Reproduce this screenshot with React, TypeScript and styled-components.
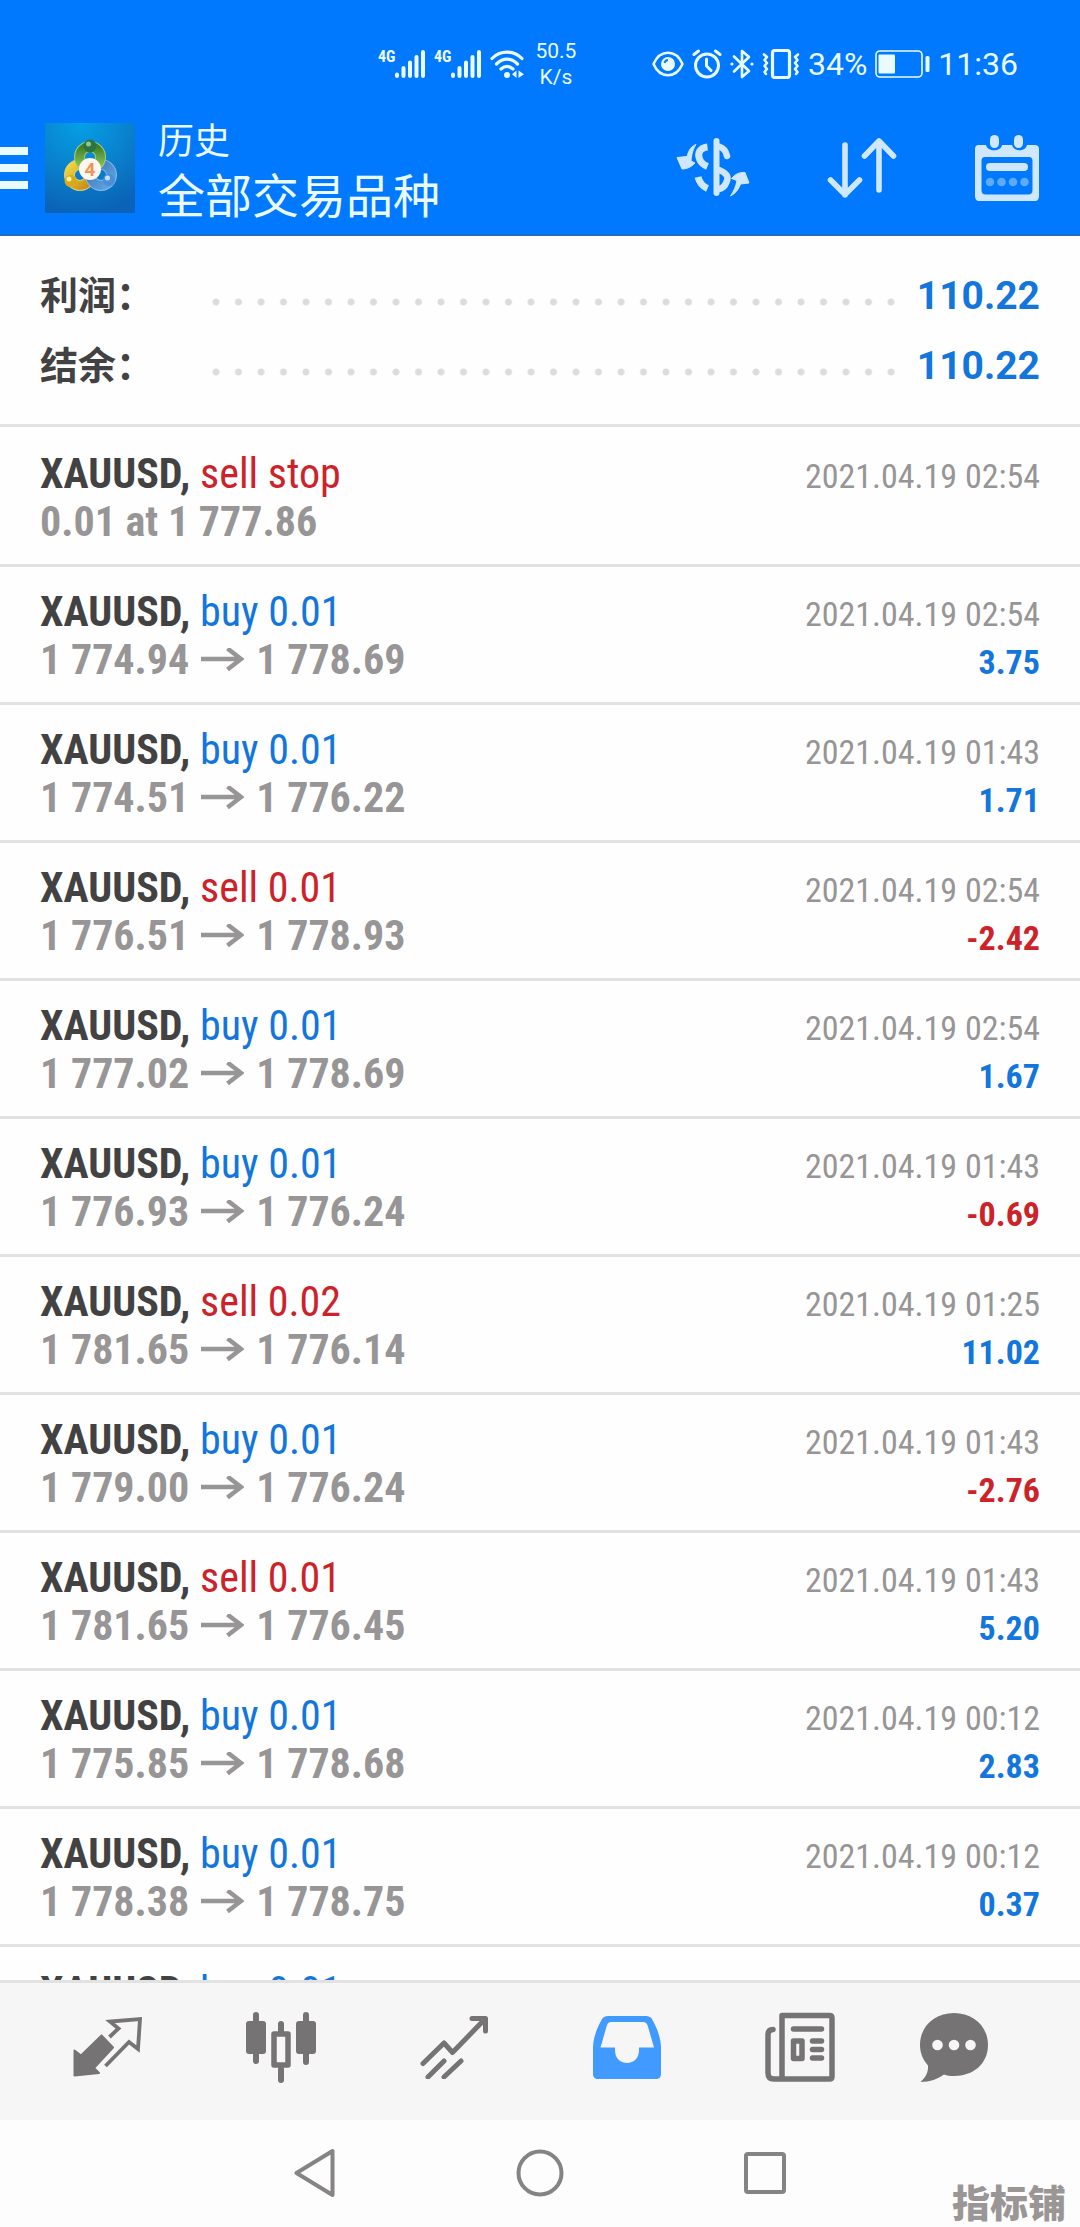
import React from "react";
import styled, { createGlobalStyle } from "styled-components";

const cjk = `"Noto Sans CJK SC", sans-serif`;
const condensed = `"Roboto Condensed", "Liberation Sans Narrow", Roboto, ${cjk}`;

const colors = {
  brand: "#0079ff",
  brandEdge: "#1c6cc8",
  onBrand: "#e9fbff",
  onBrandSoft: "#cfe8ff",
  ink: "#434243",
  muted: "#979595",
  rule: "#e2e2e2",
  up: "#1276dc",
  down: "#cc2229",
  tab: "#757373",
};

const GlobalStyle = createGlobalStyle`
  * { box-sizing: border-box; }
  body { margin: 0; background: #fdfdfd; }
  button { border: 0; padding: 0; background: none; color: inherit; font: inherit; cursor: pointer; }
  svg { display: block; flex: none; }
`;

const Screen = styled.div`
  display: flex;
  flex-direction: column;
  height: 100vh;
  background: #fefefe;
  font-family: Roboto, ${cjk};
  color: ${colors.ink};
`;

const TopBar = styled.header`
  flex: none;
  background: ${colors.brand};
  color: ${colors.onBrand};
  border-bottom: 2px solid ${colors.brandEdge};
`;

const StatusBar = styled.div`
  display: flex;
  justify-content: flex-end;
  gap: 74px;
  height: 112px;
  padding: 16px 62px 0 0;
`;

const StatusGroup = styled.div<{ $gap: number }>`
  display: flex;
  align-items: center;
  gap: ${(p) => p.$gap}px;
`;

const Signal = styled.div`
  display: flex;
  align-items: flex-start;
  width: 46px;
  justify-content: space-between;
`;

const NetworkType = styled.span`
  font: 700 16px/14px ${condensed};
`;

const Speed = styled.div`
  width: 44px;
  font-size: 21px;
  line-height: 26px;
  text-align: center;
`;

const StatusText = styled.span`
  font-size: 32px;
  line-height: 36px;
`;

const AppBar = styled.div`
  display: flex;
  align-items: center;
  height: 122px;
  padding: 0 40px 10px 0;
`;

const MenuButton = styled.button`
  display: grid;
  gap: 9px;
  width: 28px;
  margin-right: 17px;
`;

const MenuLine = styled.span`
  height: 8px;
  background: ${colors.onBrand};
`;

const Heading = styled.div`
  flex: 1;
  margin-left: 23px;
  white-space: nowrap;
`;

const Caption = styled.div`
  font: 400 36px/50px ${cjk};
`;

const Title = styled.h1`
  margin: 0;
  font: 400 47px/60px ${cjk};
`;

const Actions = styled.div`
  display: flex;
  align-items: center;
  gap: 77px;
  color: ${colors.onBrandSoft};
`;

const Summary = styled.dl`
  flex: none;
  margin: 0;
  padding: 24px 40px 24px;
  border-bottom: 3px solid ${colors.rule};
`;

const SummaryRow = styled.div`
  display: flex;
  align-items: baseline;
  height: 70px;
`;

const SummaryLabel = styled.dt`
  width: 165px;
  font: 700 38px/66px ${cjk};
`;

const Leader = styled.span`
  flex: 1;
  align-self: center;
  height: 8px;
  margin-top: 14px;
  background: radial-gradient(circle, #dcdcdc 3px, transparent 4px) space 0 0 / 22px 8px;
`;

const SummaryValue = styled.dd`
  margin: 0;
  width: 138px;
  text-align: right;
  font: 700 39px/66px Roboto, sans-serif;
  color: ${colors.up};
`;

const Deals = styled.ul`
  flex: 1;
  min-height: 0;
  margin: 0;
  padding: 2px 0 0;
  overflow-y: auto;
  scrollbar-width: none;
  list-style: none;
  font-family: ${condensed};
`;

const DealRow = styled.li`
  display: grid;
  grid-template-columns: 1fr auto;
  grid-auto-rows: 48px;
  align-items: baseline;
  height: 138px;
  padding: 21px 40px 0;
  border-bottom: 3px solid ${colors.rule};
`;

const Symbol = styled.div`
  font-size: 42px;
  line-height: 48px;
  font-weight: 700;
  white-space: pre;
`;

const Side = styled.span<{ $down: boolean }>`
  font-weight: 400;
  color: ${(p) => (p.$down ? colors.down : colors.up)};
`;

const When = styled.time`
  font-size: 34px;
  line-height: 48px;
  color: ${colors.muted};
`;

const Prices = styled.div`
  display: flex;
  align-items: baseline;
  gap: 12px;
  font-size: 42px;
  line-height: 48px;
  font-weight: 700;
  color: ${colors.muted};
`;

const Profit = styled.div<{ $down: boolean }>`
  font-size: 34px;
  line-height: 48px;
  font-weight: 700;
  text-align: right;
  color: ${(p) => (p.$down ? colors.down : colors.up)};
`;

const TabBar = styled.nav`
  flex: none;
  display: grid;
  grid-template-columns: repeat(5, 173fr) 136fr;
  height: 140px;
  padding: 0 58px 9px 22px;
  background: #f7f6f6;
  border-top: 3px solid ${colors.rule};
  color: ${colors.tab};
`;

const Tab = styled.button<{ $active?: boolean }>`
  display: grid;
  place-items: center;
  color: ${(p) => (p.$active ? "#419aff" : "inherit")};
`;

const SystemNav = styled.nav`
  position: relative;
  flex: none;
  display: grid;
  grid-template-columns: repeat(3, 225px);
  justify-content: center;
  height: 107px;
  padding-bottom: 2px;
  background: #fdfdfd;
  color: #858383;
`;

const Watermark = styled.span`
  position: absolute;
  right: 14px;
  bottom: 4px;
  font: 900 38px/44px ${cjk};
  color: #9a9696;
`;

const SignalBars = () => (
  <svg width="30" height="28" viewBox="0 0 30 28" stroke="currentColor" strokeWidth="4" strokeLinecap="round">
    <path d="M2 24.500V26M8.500 18V26M15 12.500V26M21.500 7V26M28 2V26" />
  </svg>
);

const WifiIcon = () => (
  <svg width="34" height="28" viewBox="0 0 34 28" fill="none" stroke="currentColor" strokeWidth="3.200" strokeLinecap="round">
    <path d="M2 8.500C10 0 24 0 32 8.500M6.500 14C13 7.500 21 7.500 27.500 14M11 19C15 15.500 19 15.500 23 19" />
    <circle cx="17" cy="25" r="3" fill="currentColor" stroke="none" />
    <path d="M26.500 20.500V28L22 24.300ZM28.500 20.500V28L34 24.300Z" fill="currentColor" stroke="none" />
  </svg>
);

const EyeIcon = () => (
  <svg width="32" height="26" viewBox="0 0 32 26" fill="none" stroke="currentColor" strokeWidth="2.600">
    <path d="M1.500 13C8 -2 24 -2 30.500 13C24 28 8 28 1.500 13Z" strokeLinejoin="round" />
    <circle cx="16" cy="13" r="7" fill="currentColor" stroke="none" />
    <path d="M12.500 12A4 4 0 0 1 16 9" stroke={colors.brand} strokeWidth="1.800" />
  </svg>
);

const AlarmIcon = () => (
  <svg width="30" height="30" viewBox="0 0 30 30" fill="none" stroke="currentColor" strokeWidth="3" strokeLinecap="round">
    <circle cx="15" cy="16.500" r="11.500" />
    <path d="M14.500 10V17L19 21.500M2 5.500L6.500 2M28 5.500L23.500 2" />
  </svg>
);

const BluetoothIcon = () => (
  <svg width="24" height="30" viewBox="0 0 24 30" fill="none" stroke="currentColor" strokeWidth="2.600" strokeLinejoin="round" strokeLinecap="round">
    <path d="M4 7.500L19 22L12 28V2L19 8L4 22.500" />
    <circle cx="2" cy="15" r="1.600" fill="currentColor" stroke="none" />
    <circle cx="22" cy="15" r="1.600" fill="currentColor" stroke="none" />
  </svg>
);

const VibrateIcon = () => (
  <svg width="38" height="30" viewBox="0 0 38 30" fill="none" stroke="currentColor" strokeLinejoin="round" strokeLinecap="round">
    <rect x="10.500" y="1.500" width="17" height="27" rx="2.500" strokeWidth="3.200" />
    <path d="M2 5.500L5 8L2.500 11L5 14L2.500 17L5 20L2.500 23L4 25M36 5.500L33 8L35.500 11L33 14L35.500 17L33 20L35.500 23L34 25" strokeWidth="2.600" />
  </svg>
);

const BatteryIcon = () => (
  <svg width="55" height="28" viewBox="0 0 55 28">
    <rect x="1" y="1" width="46" height="26" rx="4" fill="none" stroke="currentColor" strokeWidth="1.600" />
    <rect x="3.500" y="4.500" width="16.500" height="19" rx="1" fill="currentColor" />
    <rect x="50.500" y="6" width="4" height="16" rx="1.500" fill="currentColor" />
  </svg>
);

const Logo = () => (
  <svg width="90" height="90" viewBox="0 0 90 90" role="img" aria-label="MetaTrader 4">
    <defs>
      <radialGradient id="tile" cx="0.400" cy="0" r="1">
        <stop offset="0" stopColor="#04a0e6" />
        <stop offset="0.550" stopColor="#0a80cc" />
        <stop offset="1" stopColor="#0a63b6" />
      </radialGradient>
      <linearGradient id="green" x1="0" y1="0" x2="0" y2="1">
        <stop offset="0" stopColor="#3f7f2c" />
        <stop offset="1" stopColor="#8fc653" />
      </linearGradient>
      <linearGradient id="gold" x1="0" y1="0" x2="1" y2="1">
        <stop offset="0" stopColor="#f0d53c" />
        <stop offset="1" stopColor="#c98a14" />
      </linearGradient>
      <linearGradient id="azure" x1="0" y1="0" x2="1" y2="1">
        <stop offset="0" stopColor="#3b78b8" />
        <stop offset="1" stopColor="#5fa5e2" />
      </linearGradient>
    </defs>
    <rect width="90" height="90" fill="url(#tile)" />
    <g fill="none" strokeWidth="9">
      <circle cx="35" cy="52" r="10.500" stroke="#d8d27a" strokeWidth="11" />
      <circle cx="35" cy="52" r="10.500" stroke="url(#gold)" />
      <circle cx="56" cy="52" r="10.500" stroke="#7fb8e6" strokeWidth="11" />
      <circle cx="56" cy="52" r="10.500" stroke="url(#azure)" />
      <circle cx="45" cy="34" r="10.500" stroke="#a4d078" strokeWidth="11" />
      <circle cx="45" cy="34" r="10.500" stroke="url(#green)" />
    </g>
    <circle cx="45" cy="23" r="6.500" fill="#2f7340" />
    <circle cx="43.500" cy="21" r="2.500" fill="#8fc49a" />
    <circle cx="25.500" cy="58" r="6" fill="#d9a91c" />
    <circle cx="24" cy="56" r="2.500" fill="#fff0a0" />
    <circle cx="64" cy="57" r="6" fill="#4c8fd6" />
    <circle cx="62.500" cy="55" r="2.500" fill="#c4e2ff" />
    <circle cx="45" cy="46" r="11" fill="#fbf6ef" />
    <text x="45" y="53" textAnchor="middle" fontFamily="Roboto, sans-serif" fontWeight="700" fontSize="19" fill="#f0935a">4</text>
  </svg>
);

const CurrencyIcon = () => (
  <svg width="74" height="62" viewBox="0 0 74 62" fill="none" stroke="currentColor">
    <path d="M40.500 4V56" strokeWidth="6" strokeLinecap="round" />
    <path d="M31.500 10C23 11 21.500 17 23.500 22C25 26 28 28 31.500 29.500M22 40C23.500 46 27 49.500 31.500 51.500" strokeWidth="7" />
    <path d="M43 9.500C48 11 50 14 51 19M43 33C51 36 53 40 50.500 45C49 49 46 51.500 43 52" strokeWidth="6.500" strokeLinecap="round" />
    <path d="M20 7.500C16 9 13 12 11 19.500L1 20.500L6 32C10 32 15 30.500 19 26L15 24C15.500 17 17.500 11 20 7.500Z" fill="currentColor" strokeWidth="1" />
    <path d="M54.500 59C58.500 57 62.500 53 64.500 47L73 46L69 35.500C64 35 59 37 55.500 41.500L61 43.500C60 49 58 54 54.500 59Z" fill="currentColor" strokeWidth="1" />
  </svg>
);

const SortIcon = () => (
  <svg width="70" height="62" viewBox="0 0 70 62" fill="none" stroke="currentColor" strokeWidth="5.600" strokeLinecap="round" strokeLinejoin="round">
    <path d="M18 8V58M3.500 43L18 57.500L32.500 43M52 53V4M37.500 19L52 4L66.500 19" />
  </svg>
);

const CalendarIcon = () => (
  <svg width="66" height="68" viewBox="0 0 66 68" fill="currentColor">
    <path fillRule="evenodd" d="M4 11H12C13.500 18 27 18 28 11H38C39.500 18 51.500 18 53 11H61C63.500 11 65 12.500 65 15V62C65 65 63.500 67 61 67H5C2.500 67 1 65 1 62V15C1 12.500 2.500 11 4 11ZM11 23C8.500 23 7.500 24.500 7.500 27V56C7.500 59 9 60.500 11.500 60.500H54.500C57 60.500 58.500 59 58.500 56V27C58.500 24.500 57.500 23 55 23Z" />
    <rect x="16" y="1" width="9" height="13" rx="4.500" />
    <rect x="40" y="1" width="9" height="13" rx="4.500" />
    <rect x="12" y="29" width="42" height="8" rx="4" />
    <g opacity="0.450">
      <circle cx="16" cy="48" r="4.300" />
      <circle cx="27.500" cy="48" r="4.300" />
      <circle cx="39" cy="48" r="4.300" />
      <circle cx="50.500" cy="48" r="4.300" />
    </g>
  </svg>
);

const ToArrow = () => (
  <svg width="43" height="24" viewBox="0 0 43 24" fill="none" stroke="currentColor" strokeWidth="4.500" role="img" aria-label="to">
    <path d="M0 11H40M26.500 0.500L40 11L26.500 21.500" />
  </svg>
);

const ArrowSlot = styled.span`
  align-self: center;
`;

const QuotesIcon = () => (
  <svg width="70" height="62" viewBox="0 0 70 62">
    <path d="M28.500 19.500L40 31.500L21 52L26 57L1.500 59.500V34.500L8 39.500Z" fill="currentColor" stroke="currentColor" strokeWidth="2" strokeLinejoin="round" />
    <path d="M36.500 21L45.500 12.500L37 5.500L67 3L65 33L56 26L32.500 50" fill="none" stroke="currentColor" strokeWidth="3.800" />
  </svg>
);

const CandlesIcon = () => (
  <svg width="72" height="72" viewBox="0 0 72 72" fill="none" stroke="currentColor" strokeWidth="6" strokeLinecap="round">
    <path d="M11 4V50M61 4V51M36 13V22M36 58V69" />
    <rect x="1" y="10" width="20" height="33" rx="3" fill="currentColor" stroke="none" />
    <rect x="51" y="10" width="20" height="33" rx="3" fill="currentColor" stroke="none" />
    <rect x="29" y="23" width="14" height="31" strokeWidth="5.500" strokeLinejoin="round" />
  </svg>
);

const TrendIcon = () => (
  <svg width="68" height="64" viewBox="0 0 68 64" fill="none" stroke="currentColor" strokeWidth="5" strokeLinecap="round" strokeLinejoin="round">
    <path d="M3 48.500L24 28L32.500 37.500L65 4M52 3.500H65.500V16M8 62L24 46M24 62L41 46" />
  </svg>
);

const InboxIcon = () => (
  <svg width="68" height="64" viewBox="0 0 68 64" fill="currentColor">
    <path fillRule="evenodd" d="M15 1H53C56 1 58 2 59.500 5C64 13 68 23 68 33V59C68 62 66 64 63 64H5C2 64 0 62 0 59V33C0 23 4 13 8.500 5C10 2 12 1 15 1ZM18 7C16 7 15 8 14 10L7.500 32.500H22V35C22 43 27 48 34 48S46 43 46 35V32.500H61L54.500 10C53.500 8 52 7 50 7Z" />
  </svg>
);

const NewsIcon = () => (
  <svg width="70" height="70" viewBox="0 0 70 70" fill="none" stroke="currentColor" strokeWidth="5.500" strokeLinecap="round" strokeLinejoin="round">
    <path d="M17 3.500H64.500Q67 3.500 67 6V64.500Q67 67 64.500 67H9Q3 67 3 61V23Q3 17.500 8 17.500M17 3.500V67" />
    <path d="M28.500 17H56.500M47.500 29H56.500M47.500 37.500H56.500M47.500 46H56.500" />
    <rect x="28.500" y="29" width="8.500" height="17.500" />
  </svg>
);

const ChatIcon = () => (
  <svg width="68" height="70" viewBox="0 0 68 70">
    <path d="M34 1C53 1 68 14 68 33S53 64 34 64C30 64 27 63.500 24 62.500C18 67 10 70 0.500 70C6 65 8.500 60 8 53.500C3 48 0 41 0 33C0 14 15 1 34 1Z" fill="currentColor" />
    <g fill="#f7f6f6">
      <circle cx="17.500" cy="33" r="5.300" />
      <circle cx="34" cy="33" r="5.300" />
      <circle cx="50.500" cy="33" r="5.300" />
    </g>
  </svg>
);

type Deal = {
  side: "buy" | "sell";
  label: string;
  open: string;
  close?: string;
  when: string;
  profit?: string;
};

const deals: Deal[] = [
  { side: "sell", label: "sell stop", open: "0.01 at 1 777.86", when: "2021.04.19 02:54" },
  { side: "buy", label: "buy 0.01", open: "1 774.94", close: "1 778.69", when: "2021.04.19 02:54", profit: "3.75" },
  { side: "buy", label: "buy 0.01", open: "1 774.51", close: "1 776.22", when: "2021.04.19 01:43", profit: "1.71" },
  { side: "sell", label: "sell 0.01", open: "1 776.51", close: "1 778.93", when: "2021.04.19 02:54", profit: "-2.42" },
  { side: "buy", label: "buy 0.01", open: "1 777.02", close: "1 778.69", when: "2021.04.19 02:54", profit: "1.67" },
  { side: "buy", label: "buy 0.01", open: "1 776.93", close: "1 776.24", when: "2021.04.19 01:43", profit: "-0.69" },
  { side: "sell", label: "sell 0.02", open: "1 781.65", close: "1 776.14", when: "2021.04.19 01:25", profit: "11.02" },
  { side: "buy", label: "buy 0.01", open: "1 779.00", close: "1 776.24", when: "2021.04.19 01:43", profit: "-2.76" },
  { side: "sell", label: "sell 0.01", open: "1 781.65", close: "1 776.45", when: "2021.04.19 01:43", profit: "5.20" },
  { side: "buy", label: "buy 0.01", open: "1 775.85", close: "1 778.68", when: "2021.04.19 00:12", profit: "2.83" },
  { side: "buy", label: "buy 0.01", open: "1 778.38", close: "1 778.75", when: "2021.04.19 00:12", profit: "0.37" },
  { side: "buy", label: "buy 0.01", open: "", when: "2021.04.19 00:12" },
];

const totals = [
  { label: "利润：", value: "110.22" },
  { label: "结余：", value: "110.22" },
];

const tabs = [
  { name: "Quotes", Icon: QuotesIcon },
  { name: "Charts", Icon: CandlesIcon },
  { name: "Trade", Icon: TrendIcon },
  { name: "History", Icon: InboxIcon },
  { name: "News", Icon: NewsIcon },
  { name: "Messages", Icon: ChatIcon },
];

export default function App() {
  return (
    <Screen>
      <GlobalStyle />
      <TopBar>
        <StatusBar>
          <StatusGroup $gap={10}>
            <Signal><NetworkType>4G</NetworkType><SignalBars /></Signal>
            <Signal><NetworkType>4G</NetworkType><SignalBars /></Signal>
            <WifiIcon />
            <Speed>50.5 K/s</Speed>
          </StatusGroup>
          <StatusGroup $gap={8}>
            <EyeIcon />
            <AlarmIcon />
            <BluetoothIcon />
            <VibrateIcon />
            <StatusText>34%</StatusText>
            <BatteryIcon />
            <StatusText>11:36</StatusText>
          </StatusGroup>
        </StatusBar>
        <AppBar>
          <MenuButton aria-label="Menu"><MenuLine /><MenuLine /><MenuLine /></MenuButton>
          <Logo />
          <Heading>
            <Caption>历史</Caption>
            <Title>全部交易品种</Title>
          </Heading>
          <Actions>
            <button aria-label="Symbol"><CurrencyIcon /></button>
            <button aria-label="Sort"><SortIcon /></button>
            <button aria-label="Period"><CalendarIcon /></button>
          </Actions>
        </AppBar>
      </TopBar>
      <Summary>
        {totals.map((t) => (
          <SummaryRow key={t.label}>
            <SummaryLabel>{t.label}</SummaryLabel>
            <Leader />
            <SummaryValue>{t.value}</SummaryValue>
          </SummaryRow>
        ))}
      </Summary>
      <Deals>
        {deals.map((d, i) => (
          <DealRow key={i}>
            <Symbol>XAUUSD, <Side $down={d.side === "sell"}>{d.label}</Side></Symbol>
            <When>{d.when}</When>
            <Prices>
              {d.open}
              {d.close && <><ArrowSlot><ToArrow /></ArrowSlot><span>{d.close}</span></>}
            </Prices>
            {d.profit && <Profit $down={d.profit.startsWith("-")}>{d.profit}</Profit>}
          </DealRow>
        ))}
      </Deals>
      <TabBar>
        {tabs.map(({ name, Icon }) => (
          <Tab key={name} aria-label={name} $active={name === "History"}><Icon /></Tab>
        ))}
      </TabBar>
      <SystemNav>
        <Tab aria-label="Back">
          <svg width="42" height="50" viewBox="0 0 42 50" fill="none" stroke="currentColor" strokeWidth="4" strokeLinejoin="round"><path d="M38.500 3V47L2.500 25Z" /></svg>
        </Tab>
        <Tab aria-label="Home">
          <svg width="48" height="48" viewBox="0 0 48 48" fill="none" stroke="currentColor" strokeWidth="4"><circle cx="24" cy="24" r="21.500" /></svg>
        </Tab>
        <Tab aria-label="Recents">
          <svg width="44" height="44" viewBox="0 0 44 44" fill="none" stroke="currentColor" strokeWidth="4"><rect x="3" y="3" width="38" height="38" rx="2" /></svg>
        </Tab>
        <Watermark>指标铺</Watermark>
      </SystemNav>
    </Screen>
  );
}
